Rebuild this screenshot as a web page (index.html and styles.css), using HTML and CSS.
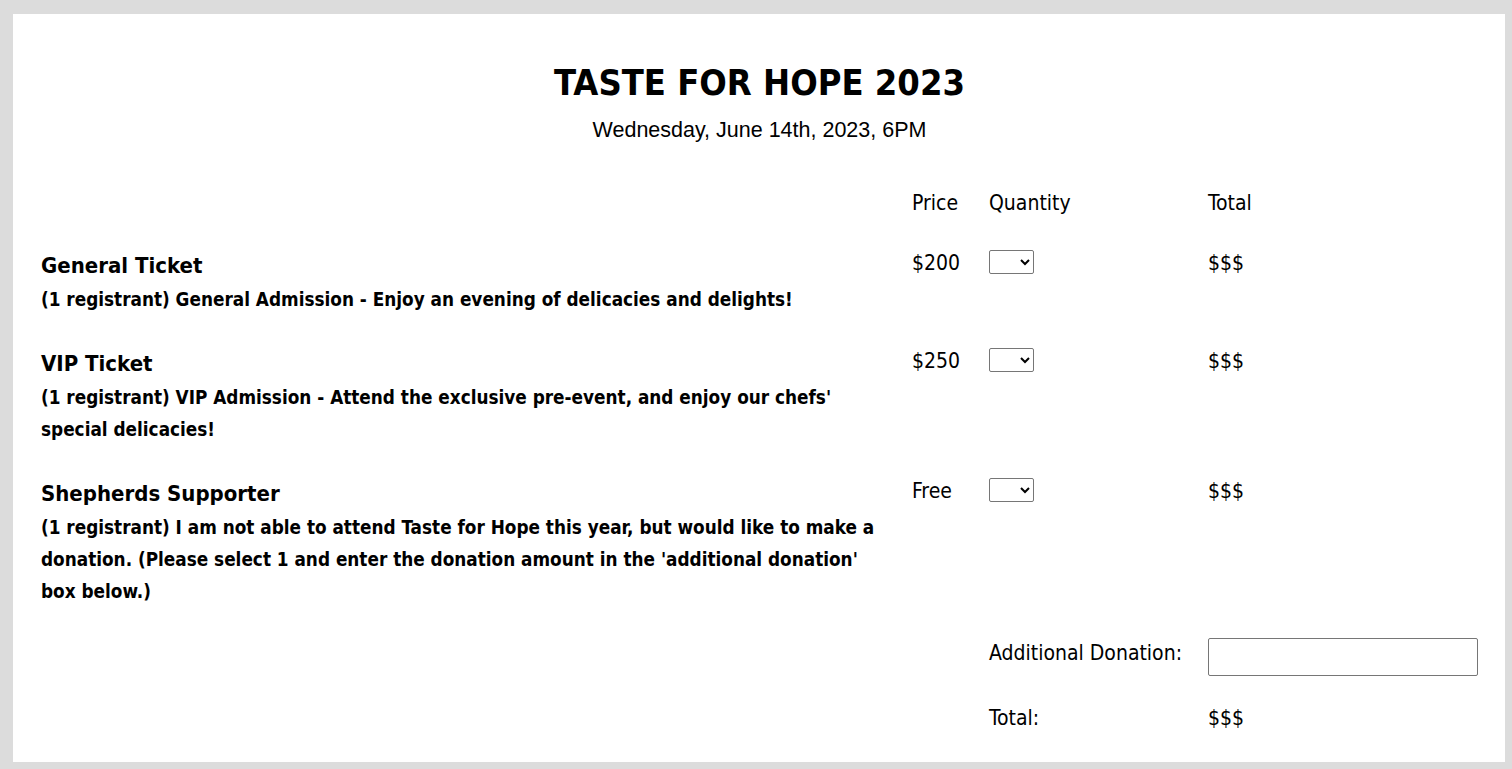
FILE: index.html
```html
<!DOCTYPE html>
<html lang="en">
<head>
<meta charset="utf-8">
<title>Taste for Hope 2023</title>
<link rel="stylesheet" href="styles.css">
</head>
<body>
<main class="card">
  <header class="event">
    <h1 class="event-title">TASTE FOR HOPE 2023</h1>
    <p class="event-date">Wednesday, June 14th, 2023, 6PM</p>
  </header>
  <div class="tickets">
    <div class="cell"></div>
    <div class="cell head">Price</div>
    <div class="cell head">Quantity</div>
    <div class="cell head">Total</div>

    <div class="cell item">
      <h3 class="item-name">General Ticket</h3>
      <p class="item-desc">(1 registrant) General Admission - Enjoy an evening of delicacies and delights!</p>
    </div>
    <div class="cell val">$200</div>
    <div class="cell qty"><select class="qty-select"><option></option><option>1</option><option>2</option></select></div>
    <div class="cell val">$$$</div>

    <div class="cell item">
      <h3 class="item-name">VIP Ticket</h3>
      <p class="item-desc">(1 registrant) VIP Admission - Attend the exclusive pre-event, and enjoy our chefs' special delicacies!</p>
    </div>
    <div class="cell val">$250</div>
    <div class="cell qty"><select class="qty-select"><option></option><option>1</option><option>2</option></select></div>
    <div class="cell val">$$$</div>

    <div class="cell item">
      <h3 class="item-name">Shepherds Supporter</h3>
      <p class="item-desc">(1 registrant) I am not able to attend Taste for Hope this year, but would like to make a donation. (Please select 1 and enter the donation amount in the 'additional donation' box below.)</p>
    </div>
    <div class="cell val">Free</div>
    <div class="cell qty"><select class="qty-select"><option></option><option>1</option></select></div>
    <div class="cell val">$$$</div>

    <div class="cell"></div>
    <div class="cell"></div>
    <div class="cell label donation-label">Additional Donation:</div>
    <div class="cell"><input class="donation-input" type="text"></div>

    <div class="cell"></div>
    <div class="cell"></div>
    <div class="cell label total-row">Total:</div>
    <div class="cell val total-row">$$$</div>
  </div>
</main>
</body>
</html>
```

FILE: styles.css
```css
html, body {
  margin: 0;
  padding: 0;
}

body {
  background: #dcdcdc;
  padding: 14px 7px 7px 13px;
  font-family: "DejaVu Sans", "Liberation Sans", sans-serif;
  font-stretch: condensed;
  color: #000;
}

.card {
  background: #fff;
  height: 748px;
  box-sizing: border-box;
  padding: 47px 27px 0 28px;
}

.event {
  text-align: center;
}

.event-title {
  margin: 0;
  font-size: 36px;
  line-height: 44px;
  font-weight: 700;
}

.event-date {
  margin: 13px 0 0;
  font-family: "Liberation Sans", Arial, sans-serif;
  font-stretch: normal;
  font-size: 21.5px;
  line-height: 24px;
}

.tickets {
  display: grid;
  grid-template-columns: 1fr 77px 219px 270px;
  row-gap: 30px;
  margin-top: 46px;
  align-items: start;
}

.cell {
  font-size: 21px;
  line-height: 30px;
}

.item {
  padding-right: 14px;
}

.item-name {
  margin: 0;
  font-size: 22px;
  line-height: 36px;
  font-weight: 700;
}

.item-desc {
  margin: 0;
  font-size: 18.8px;
  line-height: 32px;
  font-weight: 700;
}

.qty {
  padding-top: 2px;
}

.qty-select {
  display: block;
  width: 45px;
  height: 24px;
  font-size: 13px;
  border: 1px solid #767676;
  border-radius: 2px;
  background: #fff;
}

.donation-input {
  display: block;
  width: 270px;
  height: 38px;
  box-sizing: border-box;
  border: 1px solid #767676;
  border-radius: 2px;
  font-size: 16px;
  padding: 2px 6px;
}

.total-row {
  margin-top: -3px;
}
```
